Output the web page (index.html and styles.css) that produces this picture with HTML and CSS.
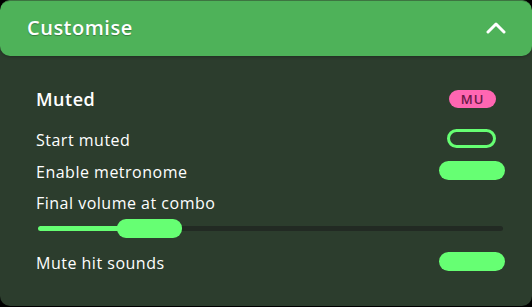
FILE: index.html
```html
<!DOCTYPE html>
<html lang="en">
<head>
    <meta charset="UTF-8">
    <title>Customise</title>
    <link rel="stylesheet" href="styles.css">
</head>
<body>
    <div class="panel">
        <div class="header">
            <h1>Customise</h1>
            <svg class="chevron" width="20" height="12" viewBox="0 0 20 12">
                <path d="M2 10 L10 2 L18 10" fill="none" stroke="#fff" stroke-width="3" stroke-linecap="round" stroke-linejoin="round"/>
            </svg>
        </div>

        <div class="content">
            <div class="row title-row">
                <h2>Muted</h2>
                <span class="badge">MU</span>
            </div>

            <div class="row">
                <span class="label">Start muted</span>
                <span class="toggle off"></span>
            </div>

            <div class="row">
                <span class="label">Enable metronome</span>
                <span class="toggle on"></span>
            </div>

            <div class="slider-group">
                <span class="label">Final volume at combo</span>
                <div class="slider">
                    <div class="fill" style="width: 18%"></div>
                    <div class="thumb"></div>
                </div>
            </div>

            <div class="row">
                <span class="label">Mute hit sounds</span>
                <span class="toggle on"></span>
            </div>
        </div>
    </div>
</body>
</html>
```

FILE: styles.css
```css
* {
    margin: 0;
    padding: 0;
    box-sizing: border-box;
}

body {
    font-family: 'Open Sans', Lato, sans-serif;
    background: #000;
    width: 532px;
    height: 307px;
    overflow: hidden;
}

.panel {
    width: 532px;
    height: 306px;
    background: #2c3d2d;
    border-radius: 10px;
    overflow: hidden;
}

.header {
    height: 56px;
    background: #4eb259;
    border-top: 1px solid #3d7441;
    border-radius: 10px;
    display: flex;
    align-items: center;
    justify-content: space-between;
    padding: 0 26px 2px 27px;
    box-shadow: 0 1px 3px rgba(0, 0, 0, 0.25);
}

.header h1 {
    color: #fff;
    font-size: 20px;
    font-weight: 600;
    letter-spacing: 0.5px;
    text-shadow: 0 1px 1px rgba(0, 0, 0, 0.3);
}

.chevron {
    display: block;
}

.content {
    padding: 31px 27px 0 36px;
}

.row {
    display: flex;
    align-items: center;
    justify-content: space-between;
    height: 32px;
}

.row .label {
    padding-top: 3px;
}

.title-row {
    height: 24px;
    margin-bottom: 11px;
    padding-right: 9px;
}

.title-row h2 {
    color: #fff;
    font-size: 18px;
    font-weight: 600;
    letter-spacing: 0.5px;
}

.label {
    display: block;
    color: #fff;
    font-size: 16px;
    letter-spacing: 0.5px;
}

.badge {
    background: #ff66b2;
    color: #6b1846;
    font-size: 13px;
    font-weight: 600;
    letter-spacing: 1px;
    width: 47px;
    height: 18px;
    border-radius: 9px;
    display: flex;
    align-items: center;
    justify-content: center;
}

.toggle {
    display: block;
    border-radius: 10px;
    height: 19px;
}

.toggle.off {
    width: 49px;
    border: 3px solid #66ff73;
    margin-right: 9px;
}

.toggle.on {
    width: 66px;
    background: #66ff73;
}

.slider-group {
    padding-top: 6px;
    height: 59px;
}

.slider {
    position: relative;
    margin: 6px 2px 0 2px;
    height: 5px;
    border-radius: 3px;
    background: #222a23;
    top: 6px;
}

.fill {
    height: 5px;
    border-radius: 3px;
    background: #66ff73;
}

.thumb {
    position: absolute;
    left: 79px;
    top: -7px;
    width: 65px;
    height: 19px;
    border-radius: 9px;
    background: #66ff73;
}
```
